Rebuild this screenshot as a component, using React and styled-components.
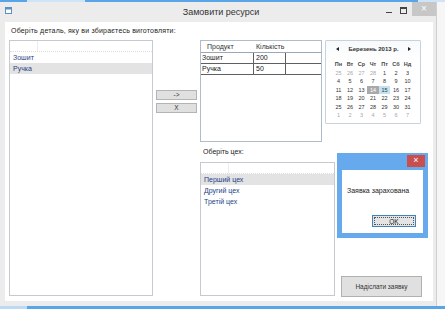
import React from 'react'
import styled, {createGlobalStyle} from 'styled-components'

const GlobalStyle = createGlobalStyle`
  body {
    margin: 0;
    font-family: "Liberation Sans", Arial, sans-serif;
  }
`

const otherMonth = (d, i) => (i < 4 || i > 34)

const days = [
    25, 26, 27, 28, 1, 2, 3,
    4, 5, 6, 7, 8, 9, 10,
    11, 12, 13, 14, 15, 16, 17,
    18, 19, 20, 21, 22, 23, 24,
    25, 26, 27, 28, 29, 30, 31,
    1, 2, 3, 4, 5, 6, 7,
]

export default function App() {
    return (
        <Screen>
            <GlobalStyle/>
            <TopStrip/>
            <Middle>
                <Window>
                    <TitleBar>
                        <TitleSide>
                            <svg width="7" height="7" viewBox="0 0 7 7">
                                <rect x="0.5" y="0.5" width="6" height="6" fill="#fff" stroke="#5b8fc7"/>
                                <rect x="1" y="1" width="5" height="1.5" fill="#5b8fc7"/>
                            </svg>
                        </TitleSide>
                        <Title>Замовити ресурси</Title>
                        <Caption>
                            <MinBtn/>
                            <MaxBtn/>
                            <CloseBtn>×</CloseBtn>
                        </Caption>
                    </TitleBar>
                    <Client>
                        <Label>Оберіть деталь, яку ви збираєтесь виготовляти:</Label>
                        <Body>
                            <ListBox $col="1" $row="1 / 4">
                                <HeaderRow/>
                                <Item>Зошит</Item>
                                <Item $selected>Ручка</Item>
                            </ListBox>
                            <ArrowButtons>
                                <SmallButton>-&gt;</SmallButton>
                                <SmallButton>X</SmallButton>
                            </ArrowButtons>
                            <Grid>
                                <GridHead>
                                    <HeadCell>Продукт</HeadCell>
                                    <HeadCell $narrow>Кількість</HeadCell>
                                </GridHead>
                                <GridRow>
                                    <Cell>Зошит</Cell>
                                    <Cell $narrow>200</Cell>
                                    <Cell $last/>
                                </GridRow>
                                <GridRow>
                                    <Cell>Ручка</Cell>
                                    <Cell $narrow>50</Cell>
                                    <Cell $last/>
                                </GridRow>
                            </Grid>
                            <Calendar>
                                <CalHeader>
                                    <ArrowLeft/>
                                    <CalTitle>Березень 2013 р.</CalTitle>
                                    <ArrowRight/>
                                </CalHeader>
                                <DayNames>
                                    {['Пн', 'Вт', 'Ср', 'Чт', 'Пт', 'Сб', 'Нд'].map(d => (
                                        <DayName key={d}>{d}</DayName>
                                    ))}
                                </DayNames>
                                <Dates>
                                    {days.map((d, i) => (
                                        <DateCell
                                            key={i}
                                            $muted={otherMonth(d, i)}
                                            $today={i === 17}
                                            $picked={i === 18}
                                        >
                                            {d}
                                        </DateCell>
                                    ))}
                                </Dates>
                            </Calendar>
                            <ShopLabel>Оберіть цех:</ShopLabel>
                            <ListBox $col="3 / 5" $row="3">
                                <HeaderRow/>
                                <Item $selected>Перший цех</Item>
                                <Item>Другий цех</Item>
                                <Item>Третій цех</Item>
                            </ListBox>
                            <SendButton>Надіслати заявку</SendButton>
                        </Body>
                    </Client>
                </Window>
                <Desktop/>
            </Middle>
            <BottomStrip/>
            <Dialog>
                <DialogBar>
                    <DialogClose>×</DialogClose>
                </DialogBar>
                <DialogBody>
                    <DialogText>Заявка зарахована</DialogText>
                    <OkButton><OkFocus>OK</OkFocus></OkButton>
                </DialogBody>
            </Dialog>
        </Screen>
    )
}

const Screen = styled.div`
  position: relative;
  width: 445px;
  height: 309px;
  overflow: hidden;
  display: flex;
  flex-direction: column;
  background: #f3f3f3;
`

const TopStrip = styled.div`
  height: 2px;
  background: linear-gradient(90deg, #5aa5e8 0 6%, #cfe4f6 6% 19%, #5aa5e8 19% 94%, #cfe4f6 94%);
`

const BottomStrip = styled.div`
  height: 3px;
  background: linear-gradient(90deg, #bcdaf4 0 6%, #5aa5e8 6%);
`

const Middle = styled.div`
  flex: 1;
  display: flex;
`

const Desktop = styled.div`
  flex: 1;
  background: #f6f6f6;
`

const Window = styled.div`
  flex: 0 0 437px;
  display: flex;
  flex-direction: column;
  background: #ececec;
  border-right: 1px solid #cfcfcf;
  box-sizing: border-box;
`

const TitleBar = styled.div`
  height: 20px;
  display: flex;
  align-items: flex-start;
`

const TitleSide = styled.div`
  width: 52px;
  padding: 5px 0 0 5px;
  box-sizing: border-box;
  line-height: 0;
`

const Title = styled.div`
  flex: 1;
  text-align: center;
  font-size: 9px;
  line-height: 9px;
  padding: 6px 0 0 6px;
  color: #333;
`

const Caption = styled.div`
  width: 52px;
  display: flex;
  justify-content: flex-end;
  align-items: flex-start;
`

const MinBtn = styled.div`
  width: 6px;
  height: 1px;
  background: #444;
  margin: 10px 8px 0 0;
`

const MaxBtn = styled.div`
  width: 5px;
  height: 4px;
  border: 1px solid #444;
  border-top-width: 2px;
  margin: 5px 5px 0 0;
`

const CloseBtn = styled.div`
  width: 24px;
  height: 14px;
  background: #c7c7c7;
  color: #fff;
  font-size: 10px;
  line-height: 13px;
  text-align: center;
`

const Client = styled.div`
  flex: 1;
  margin: 0 3px 5px 5px;
  padding-top: 4px;
  background: #fff;
  display: flex;
  flex-direction: column;
`

const Label = styled.div`
  height: 10px;
  line-height: 10px;
  font-size: 7px;
  letter-spacing: 0.2px;
  color: #222;
  padding-left: 6px;
  margin-bottom: 4px;
`

const Body = styled.div`
  margin-left: 4px;
  display: grid;
  grid-template-columns: 144px 47px 125px 10px 97px;
  grid-template-rows: 102px 20px 134px;
`

const ListBox = styled.div`
  grid-column: ${p => p.$col};
  grid-row: ${p => p.$row};
  border: 1px solid #c5cad1;
  background: #fff;
`

const HeaderRow = styled.div`
  height: 11px;
  border-bottom: 1px dotted #dcdcdc;
  background: linear-gradient(90deg, transparent 27px, #ececec 27px 28px, transparent 28px);
  box-sizing: border-box;
`

const Item = styled.div`
  height: 11px;
  line-height: 11px;
  font-size: 7px;
  padding-left: 3px;
  color: #243f86;
  background: ${p => p.$selected ? '#e3e3e3' : 'transparent'};
`

const ArrowButtons = styled.div`
  grid-column: 2;
  grid-row: 1;
  display: flex;
  flex-direction: column;
  gap: 3px;
  padding: 50px 0 0 3px;
`

const SmallButton = styled.div`
  width: 41px;
  height: 10px;
  box-sizing: border-box;
  border: 1px solid #b4b4b4;
  background: #e0e0e0;
  font-size: 6.5px;
  line-height: 8px;
  text-align: center;
  color: #333;
`

const Grid = styled.div`
  grid-column: 3;
  grid-row: 1;
  width: 122px;
  border: 1px solid #aebccb;
  box-sizing: border-box;
  background: #fff;
`

const GridHead = styled.div`
  height: 11px;
  display: grid;
  grid-template-columns: 53px 32px 1fr;
  border-bottom: 1px solid #9aa7b5;
`

const HeadCell = styled.div`
  font-size: 7px;
  line-height: 11px;
  color: #333;
  padding-left: ${p => p.$narrow ? '2px' : '6px'};
`

const GridRow = styled.div`
  height: 10px;
  display: grid;
  grid-template-columns: 53px 32px 1fr;
  border-bottom: 1px solid #5f5f5f;
`

const Cell = styled.div`
  font-size: 7px;
  line-height: 10px;
  color: #222;
  padding-left: ${p => p.$narrow ? '2px' : '1px'};
  border-right: ${p => p.$last ? 'none' : '1px solid #5f5f5f'};
`

const Calendar = styled.div`
  grid-column: 4 / 6;
  grid-row: 1;
  align-self: start;
  width: 96px;
  height: 84px;
  box-sizing: border-box;
  border: 1px solid #c8d2dd;
  border-radius: 1px;
  background: linear-gradient(#f7f9fb, #fff 20px);
`

const CalHeader = styled.div`
  height: 16px;
  display: flex;
  align-items: center;
  justify-content: space-between;
  padding: 0 9px 0 10px;
`

const ArrowLeft = styled.span`
  width: 0;
  height: 0;
  border-top: 2.5px solid transparent;
  border-bottom: 2.5px solid transparent;
  border-right: 3px solid #222;
`

const ArrowRight = styled.span`
  width: 0;
  height: 0;
  border-top: 2.5px solid transparent;
  border-bottom: 2.5px solid transparent;
  border-left: 3px solid #222;
`

const CalTitle = styled.span`
  font-size: 6px;
  font-weight: bold;
  color: #333;
`

const DayNames = styled.div`
  display: grid;
  grid-template-columns: repeat(7, 11.5px);
  justify-content: center;
  margin-top: 3px;
  height: 8px;
`

const DayName = styled.div`
  font-size: 5.5px;
  line-height: 8px;
  font-weight: bold;
  text-align: center;
  color: #444;
`

const Dates = styled.div`
  display: grid;
  grid-template-columns: repeat(7, 11.5px);
  grid-auto-rows: 8.4px;
  justify-content: center;
  margin-top: 1px;
`

const DateCell = styled.div`
  font-size: 5.5px;
  line-height: 8.4px;
  text-align: center;
  color: ${p => p.$today ? '#fff' : p.$muted ? '#a8a8a8' : '#333'};
  background: ${p => p.$today ? '#a9a9a9' : p.$picked ? '#c4e2f4' : 'transparent'};
`

const ShopLabel = styled.div`
  grid-column: 3;
  grid-row: 2;
  align-self: center;
  font-size: 7px;
  color: #222;
  padding: 0 0 2px 3px;
`

const SendButton = styled.div`
  grid-column: 5;
  grid-row: 3;
  align-self: end;
  margin: 0 0 -1px 6px;
  width: 81px;
  height: 21px;
  box-sizing: border-box;
  border: 1px solid #b0b0b0;
  background: #e0e0e0;
  font-size: 6.5px;
  line-height: 19px;
  text-align: center;
  color: #333;
`

const Dialog = styled.div`
  position: absolute;
  left: 337px;
  top: 153px;
  width: 91px;
  height: 85px;
  box-sizing: border-box;
  background: #66a9ec;
  padding: 0 5px 5px;
  display: flex;
  flex-direction: column;
`

const DialogBar = styled.div`
  height: 17px;
  display: flex;
  justify-content: flex-end;
  align-items: flex-start;
  padding-top: 2px;
  box-sizing: border-box;
  margin-right: -2px;
`

const DialogClose = styled.div`
  width: 18px;
  height: 12px;
  background: #c94f4f;
  color: #fff;
  font-size: 9px;
  line-height: 11px;
  text-align: center;
`

const DialogBody = styled.div`
  flex: 1;
  background: #fff;
  display: flex;
  flex-direction: column;
  padding: 16px 0 0 5px;
`

const DialogText = styled.div`
  font-size: 7px;
  color: #222;
  line-height: 10px;
`

const OkButton = styled.div`
  align-self: flex-end;
  margin: 19px 7px 0 0;
  width: 44px;
  height: 12px;
  box-sizing: border-box;
  border: 1px solid #3f84bd;
  background: #e4e4e4;
  padding: 1px;
`

const OkFocus = styled.div`
  height: 100%;
  box-sizing: border-box;
  border: 1px dotted #555;
  font-size: 6.5px;
  line-height: 7px;
  text-align: center;
  color: #222;
`
